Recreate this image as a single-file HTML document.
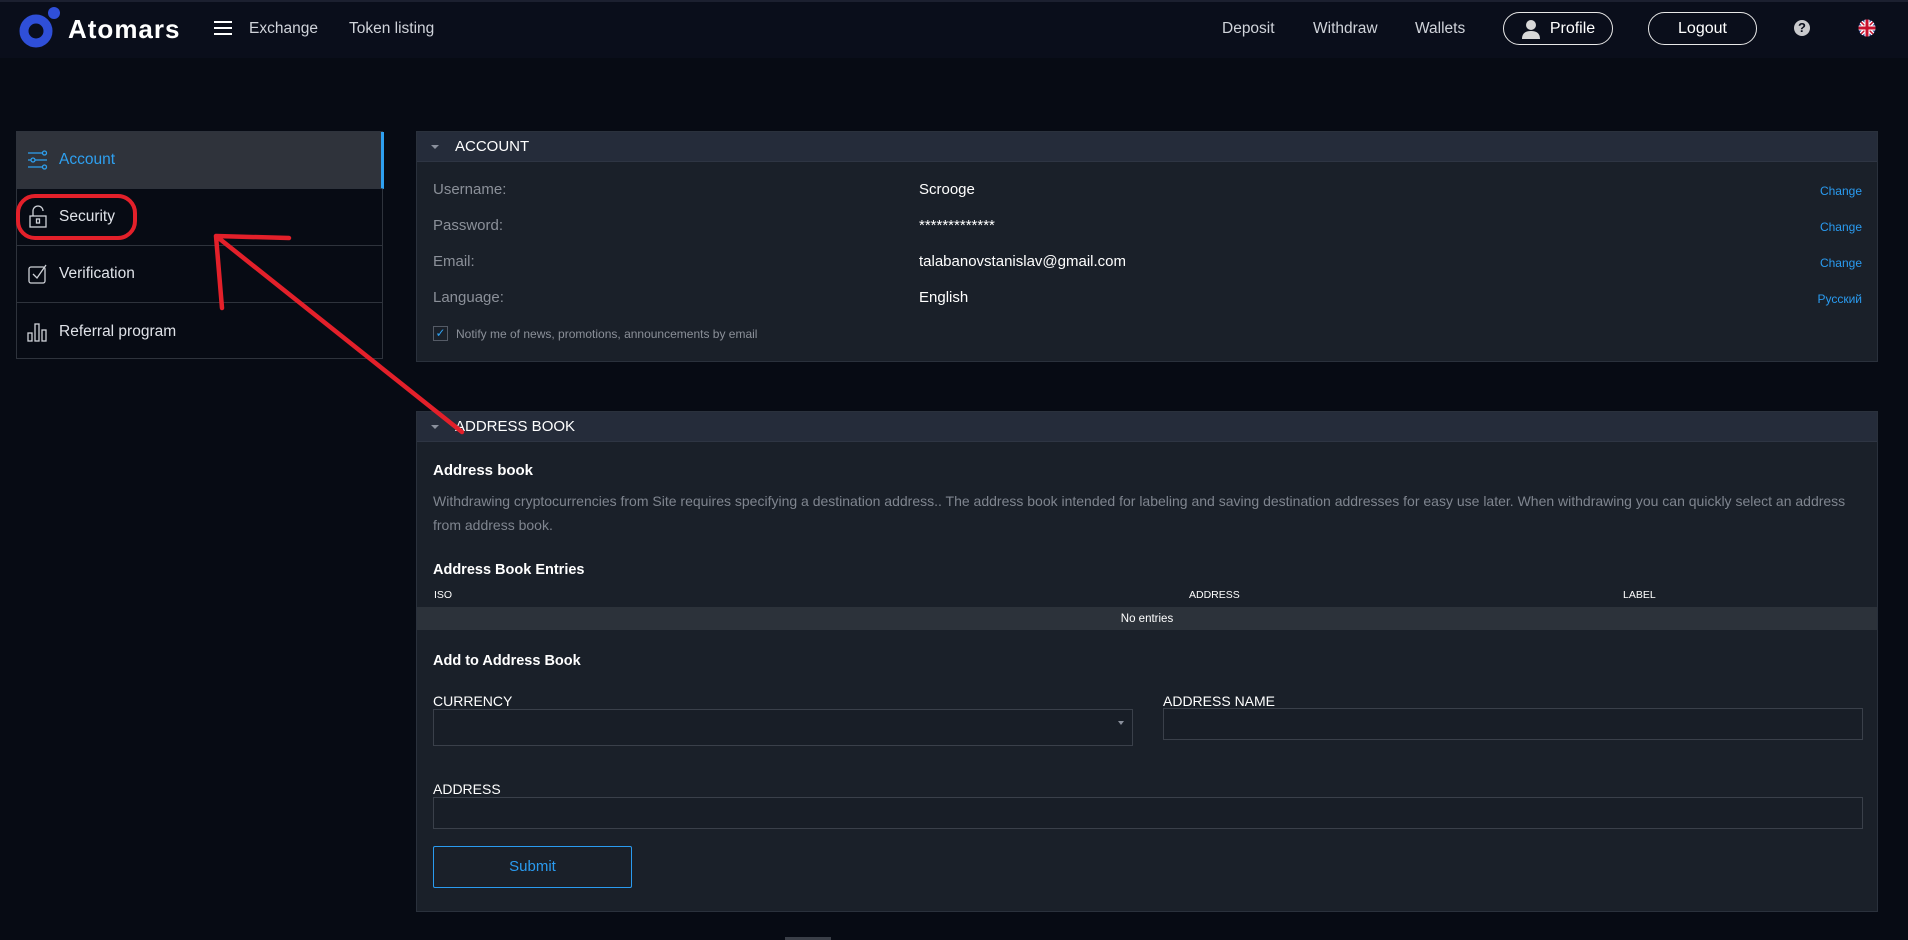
<!DOCTYPE html>
<html><head><meta charset="utf-8"><style>
*{margin:0;padding:0;box-sizing:border-box}
body{width:1908px;height:940px;background:#070b14;font-family:"Liberation Sans",Arial,sans-serif;color:#fff;position:relative;overflow:hidden}
.a{position:absolute}
.hdr{left:0;top:0;width:1908px;height:58px;background:#0a0e1b;border-top:2px solid #1c2030}
.nav{font-size:15.5px;color:#d0d3da;top:20px}
.btn{border:1.5px solid #e8e8e8;border-radius:17px;height:33px;top:12px;font-size:16px;color:#fff;display:flex;align-items:center;justify-content:center}
.side{left:16px;top:131px;width:367px;height:228px;border:1px solid #2e333c}
.item{position:absolute;left:0;width:366px;height:57px;border-bottom:1px solid #2e333c;font-size:15.5px;color:#dfe2e8;display:flex;align-items:center;padding-left:42px}
.item svg{position:absolute;left:10px}
.panel{left:416px;width:1462px;background:#1a2029;border:1px solid #2a313c}
.ph{height:30px;background:#252c3a;border-bottom:1px solid #2e3543;display:flex;align-items:center;font-size:15px;color:#fff}
.ph i{display:inline-block;width:0;height:0;border-left:4px solid transparent;border-right:4px solid transparent;border-top:4px solid #8a909c;margin:0 16px 0 14px}
.lbl{left:16px;font-size:15px;color:#8b9099}
.val{left:502px;font-size:15px;color:#fff}
.chg{right:15px;font-size:12px;color:#2a9bf0}
.inp{border:1px solid #3a404a;background:#181e27}
.cap{font-size:14px;color:#fff}
</style></head><body>
<div class="a hdr"></div>
<svg class="a" style="left:18px;top:6px" width="50" height="46"><circle cx="18" cy="25" r="12" fill="none" stroke="#2f4fd8" stroke-width="9"/><circle cx="36" cy="7" r="6" fill="#2f4fd8"/></svg>
<div class="a" style="left:68px;top:14px;font-size:26px;font-weight:bold;letter-spacing:1px">Atomars</div>
<svg class="a" style="left:214px;top:21px" width="18" height="14"><rect y="0" width="18" height="2" fill="#fff"/><rect y="6" width="18" height="2" fill="#fff"/><rect y="12" width="18" height="2" fill="#fff"/></svg>
<div class="a nav" style="left:249px">Exchange</div>
<div class="a nav" style="left:349px">Token listing</div>
<div class="a nav" style="left:1222px">Deposit</div>
<div class="a nav" style="left:1313px">Withdraw</div>
<div class="a nav" style="left:1415px">Wallets</div>
<div class="a btn" style="left:1503px;width:110px"><svg width="20" height="20" style="margin-right:9px"><circle cx="10" cy="6" r="5" fill="#d8d8d8"/><path d="M1 20 Q1 12 10 12 Q19 12 19 20Z" fill="#d8d8d8"/></svg>Profile</div>
<div class="a btn" style="left:1648px;width:109px">Logout</div>
<div class="a" style="left:1794px;top:20px;width:16px;height:16px;border-radius:50%;background:#c9c9cc;color:#0a0e1b;font-size:13px;font-weight:bold;text-align:center;line-height:16px">?</div>
<svg class="a" style="left:1858px;top:19px" width="18" height="18"><clipPath id="c"><circle cx="9" cy="9" r="8.5"/></clipPath><g clip-path="url(#c)"><rect width="18" height="18" fill="#2a3c8c"/><path d="M0 0L18 18M18 0L0 18" stroke="#fff" stroke-width="4"/><path d="M0 0L18 18M18 0L0 18" stroke="#c8102e" stroke-width="1.5"/><path d="M9 0V18M0 9H18" stroke="#fff" stroke-width="5"/><path d="M9 0V18M0 9H18" stroke="#c8102e" stroke-width="3"/></g></svg>

<div class="a side">
<div class="item" style="top:0;background:#2f333b;color:#2ea0f0;border-right:3px solid #2ea0f0;width:367px"><svg width="22" height="22" viewBox="0 0 22 22" fill="none" stroke="#2ea0f0" stroke-width="1.3"><path d="M1 4H15M1 11H4M8 11H20M1 18H15"/><circle cx="17.5" cy="4" r="2"/><circle cx="6" cy="11" r="2"/><circle cx="17.5" cy="18" r="2"/></svg>Account</div>
<div class="item" style="top:57px"><svg width="22" height="24" viewBox="0 0 22 24" fill="none" stroke="#cfd2d8" stroke-width="1.3"><rect x="3" y="11" width="16" height="11"/><path d="M6 11V6a5 5 0 0 1 10 0"/><rect x="9.5" y="14" width="3" height="4"/></svg>Security</div>
<div class="item" style="top:114px"><svg width="22" height="22" viewBox="0 0 22 22" fill="none" stroke="#cfd2d8" stroke-width="1.3"><rect x="2" y="4" width="16" height="16" rx="2"/><path d="M6 11l4 4 9-13"/></svg>Verification</div>
<div class="item" style="top:171px;border-bottom:none"><svg width="22" height="22" viewBox="0 0 22 22" fill="none" stroke="#cfd2d8" stroke-width="1.3"><rect x="1" y="12" width="4" height="8"/><rect x="8" y="3" width="4" height="17"/><rect x="15" y="9" width="4" height="11"/></svg>Referral program</div>
</div>

<div class="a panel" style="top:131px;height:231px">
<div class="ph"><i></i>ACCOUNT</div>
<div class="a lbl" style="top:49px">Username:</div><div class="a val" style="top:49px">Scrooge</div><div class="a chg" style="top:52px">Change</div>
<div class="a lbl" style="top:85px">Password:</div><div class="a val" style="top:85px">*************</div><div class="a chg" style="top:88px">Change</div>
<div class="a lbl" style="top:121px">Email:</div><div class="a val" style="top:121px">talabanovstanislav@gmail.com</div><div class="a chg" style="top:124px">Change</div>
<div class="a lbl" style="top:157px">Language:</div><div class="a val" style="top:157px">English</div><div class="a chg" style="top:160px">Русский</div>
<div class="a" style="left:16px;top:194px;width:15px;height:15px;border:1px solid #555b66;color:#2ea0f0;font-size:12px;text-align:center;line-height:13px">✓</div>
<div class="a" style="left:39px;top:195px;font-size:12px;color:#8b9099">Notify me of news, promotions, announcements by email</div>
</div>

<div class="a panel" style="top:411px;height:501px">
<div class="ph"><i></i>ADDRESS BOOK</div>
<div class="a" style="left:16px;top:50px;font-size:15px;font-weight:bold">Address book</div>
<div class="a" style="left:16px;top:77px;font-size:14px;color:#7f858f;line-height:24px;white-space:nowrap">Withdrawing cryptocurrencies from Site requires specifying a destination address.. The address book intended for labeling and saving destination addresses for easy use later. When withdrawing you can quickly select an address<br>from address book.</div>
<div class="a" style="left:16px;top:150px;font-size:14.5px;font-weight:bold">Address Book Entries</div>
<div class="a" style="left:17px;top:177px;font-size:10.5px">ISO</div>
<div class="a" style="left:772px;top:177px;font-size:10.5px">ADDRESS</div>
<div class="a" style="left:1206px;top:177px;font-size:10.5px">LABEL</div>
<div class="a" style="left:0;top:195px;width:1460px;height:23px;background:#2c323a;font-size:11.5px;text-align:center;line-height:24px">No entries</div>
<div class="a" style="left:16px;top:241px;font-size:14.5px;font-weight:bold">Add to Address Book</div>
<div class="a cap" style="left:16px;top:281px">CURRENCY</div>
<div class="a inp" style="left:16px;top:297px;width:700px;height:37px"><div class="a" style="right:8px;top:11px;border-left:3px solid transparent;border-right:3px solid transparent;border-top:4px solid #8a909c"></div></div>
<div class="a cap" style="left:746px;top:281px">ADDRESS NAME</div>
<div class="a inp" style="left:746px;top:296px;width:700px;height:32px"></div>
<div class="a cap" style="left:16px;top:369px">ADDRESS</div>
<div class="a inp" style="left:16px;top:385px;width:1430px;height:32px"></div>
<div class="a" style="left:16px;top:434px;width:199px;height:42px;border:1px solid #2a9bf0;border-radius:2px;color:#2a9bf0;font-size:15px;text-align:center;line-height:40px">Submit</div>
</div>
<div class="a" style="left:785px;top:937px;width:46px;height:3px;background:#3a3f48"></div>

<svg class="a" style="left:0;top:0" width="1908" height="940" fill="none" stroke="#e3202a" stroke-linecap="round">
<rect x="18" y="196" width="117" height="42" rx="17" stroke-width="4"/>
<path d="M462 432L216 236M216 236L289 238M216 236L222 308" stroke-width="4.5"/>
</svg>
</body></html>
